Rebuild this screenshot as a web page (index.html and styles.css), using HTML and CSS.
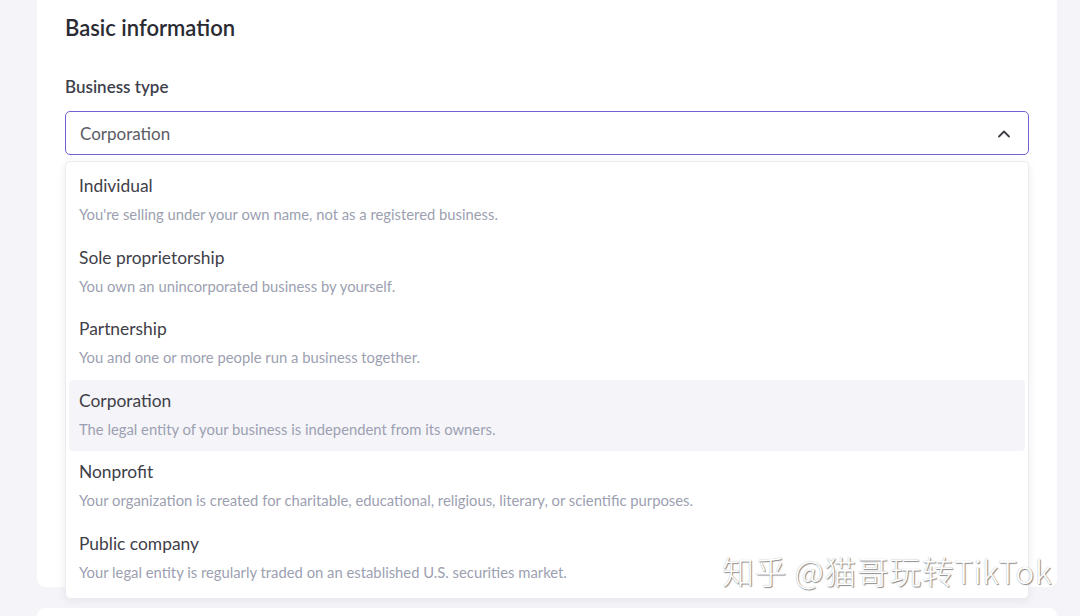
FILE: index.html
```html
<!DOCTYPE html>
<html lang="en">
<head>
<meta charset="utf-8">
<title>Basic information</title>
<link rel="stylesheet" href="styles.css">
</head>
<body>
<div class="page">
  <section class="card">
    <h2 class="card-title">Basic information</h2>
    <div class="field">
      <label class="field-label">Business type</label>
      <div class="select">
        <span class="select-value">Corporation</span>
        <svg class="chevron" width="14" height="9" viewBox="0 0 14 9"><path d="M2 7.5 L7 2.5 L12 7.5" fill="none" stroke="#3f3f46" stroke-width="1.8" stroke-linecap="round" stroke-linejoin="round"/></svg>
      </div>
      <ul class="menu">
        <li class="option">
          <div class="option-title">Individual</div>
          <div class="option-desc">You're selling under your own name, not as a registered business.</div>
        </li>
        <li class="option">
          <div class="option-title">Sole proprietorship</div>
          <div class="option-desc">You own an unincorporated business by yourself.</div>
        </li>
        <li class="option">
          <div class="option-title">Partnership</div>
          <div class="option-desc">You and one or more people run a business together.</div>
        </li>
        <li class="option option-active">
          <div class="option-title">Corporation</div>
          <div class="option-desc">The legal entity of your business is independent from its owners.</div>
        </li>
        <li class="option">
          <div class="option-title">Nonprofit</div>
          <div class="option-desc">Your organization is created for charitable, educational, religious, literary, or scientific purposes.</div>
        </li>
        <li class="option">
          <div class="option-title">Public company</div>
          <div class="option-desc">Your legal entity is regularly traded on an established U.S. securities market.</div>
        </li>
      </ul>
    </div>
    <div class="card-rest"></div>
  </section>
  <section class="card card-next"></section>
</div>
<div class="watermark">知乎 @猫哥玩转TikTok</div>
</body>
</html>
```

FILE: styles.css
```css
* { box-sizing: border-box; }
html, body {
  margin: 0;
  padding: 0;
  height: 100%;
  overflow: hidden;
}
body {
  background: #f5f5f9;
  font-family: Lato, "Open Sans", "Liberation Sans", sans-serif;
  color: #3a3a42;
}
.page {
  width: 1020px;
  margin-left: 37px;
  display: flex;
  flex-direction: column;
  gap: 21px;
}
.card {
  background: #ffffff;
  border-radius: 0 0 8px 8px;
  padding: 14px 28px 0;
}
.card-next {
  height: 40px;
  border-radius: 8px 8px 0 0;
}
.card-title {
  margin: 0;
  font-size: 22px;
  line-height: 28px;
  font-weight: 600;
  color: #2a2a32;
}
.field {
  position: relative;
  margin-top: 33px;
}
.field-label {
  display: block;
  font-size: 17px;
  line-height: 24px;
  font-weight: 600;
  color: #3e3f4a;
  margin-bottom: 12px;
}
.select {
  height: 44px;
  border: 1px solid #6f62d4;
  border-radius: 5px;
  display: flex;
  align-items: center;
  justify-content: space-between;
  padding: 0 17px 0 14px;
}
.select-value {
  font-size: 17px;
  color: #5c5c65;
}
.chevron { display: block; }
.card-rest { height: 432px; }
.menu {
  position: absolute;
  top: calc(100% + 6px);
  left: 0;
  right: 0;
  margin: 0;
  padding: 3px;
  list-style: none;
  background: #ffffff;
  border: 1px solid #ececf0;
  border-radius: 5px;
  box-shadow: 0 2px 8px rgba(30, 30, 60, 0.08);
  z-index: 2;
}
.option {
  padding: 9px 10px 12.6px;
  border-radius: 4px;
}
.option-active { background: #f5f5f9; }
.option-title {
  font-size: 17.4px;
  line-height: 24px;
  color: #404048;
}
.option-desc {
  margin-top: 6px;
  font-size: 14.8px;
  line-height: 20px;
  color: #9c9fb1;
}
.watermark {
  position: absolute;
  left: 722px;
  top: 550px;
  z-index: 10;
  font-family: "Noto Sans CJK SC", sans-serif;
  font-size: 32px;
  line-height: 40px;
  font-weight: 300;
  letter-spacing: 0.5px;
  color: #ffffff;
  text-shadow: 1px 1px 1px #8a8a8a, 0 0 1px #aaaaaa;
  white-space: nowrap;
}
```
